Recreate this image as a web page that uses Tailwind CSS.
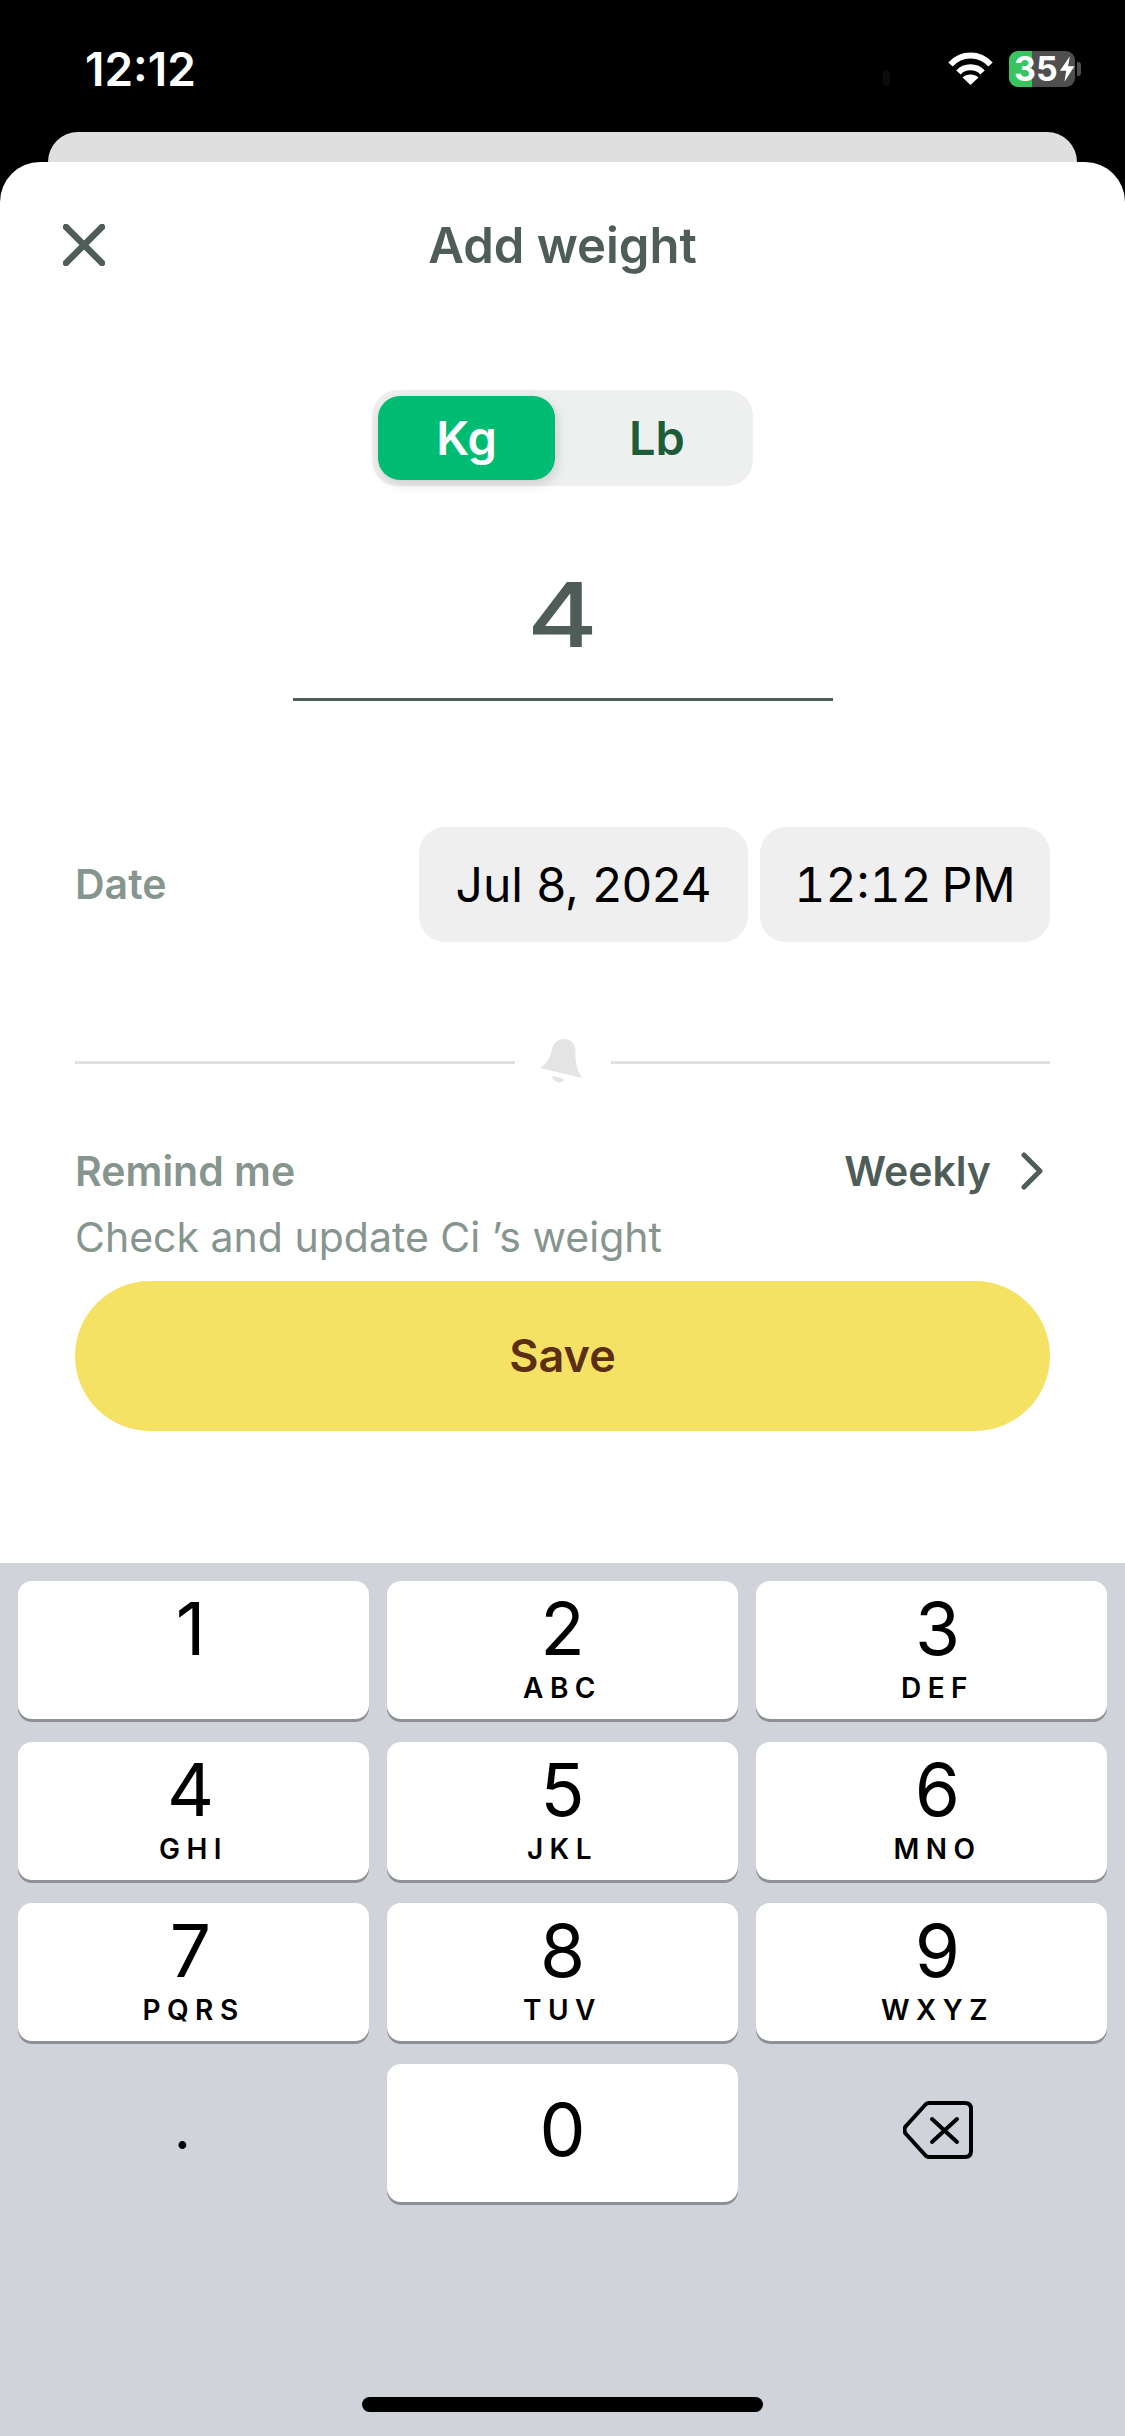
<!DOCTYPE html>
<html lang="en">
<head>
  <meta charset="UTF-8">
  <meta name="viewport" content="width=device-width, initial-scale=1.0">
  <title>Add weight</title>
  <script src="https://cdn.jsdelivr.net/npm/@tailwindcss/browser@4"></script>
</head>
<body class="bg-black font-['Inter',sans-serif]">
  <div class="w-[1125px] h-[2436px] flex flex-col overflow-hidden">

    <!-- status bar -->
    <div class="relative h-[132px] flex pl-[85px] pr-[50px] pt-[42px] text-white shrink-0">
      <span class="text-[46px] leading-[54px] font-semibold">12:12</span>
      <div class="absolute left-[883px] top-[70px] w-[7px] h-[16px] rounded-full bg-[#0c0c0c]"></div>
      <div class="ml-auto flex items-start gap-[16px] pt-[10px]">
        <svg class="w-[45px] h-[33px]" viewBox="0 0 45 33" fill="none" stroke="white" stroke-width="6">
          <path d="M2.5 12.5C13.5 0.5 31.5 0.5 42.5 12.5"/>
          <path d="M10.5 20.5C16.5 13.5 28.500 13.5 34.5 20.5"/>
          <path d="M22.5 33L14.5 25.5C18.5 21.5 26.5 21.5 30.5 25.5Z" fill="white" stroke="none"/>
        </svg>
        <div class="relative w-[66px] h-[36px] -mt-[1px] rounded-[9px] bg-[#4f4f4f]">
          <div class="absolute left-0 top-0 h-full w-[23px] rounded-l-[9px] bg-[#3ac45e]"></div>
          <div class="absolute inset-0 flex items-center pl-[5px] text-[34px] leading-none font-bold">
            <span>35</span>
            <svg class="w-[18px] h-[28px] ml-[1px]" viewBox="0 0 18 28" fill="white"><path d="M12 0L1 16H8L6 28L17 11H10Z"/></svg>
          </div>
          <div class="absolute -right-[6px] top-[11px] w-[4px] h-[14px] rounded-r-[3px] bg-[#4f4f4f]"></div>
        </div>
      </div>
    </div>

    <!-- card behind the sheet -->
    <div class="h-[30px] mx-[48px] rounded-t-[30px] bg-[#dfdfdf] shrink-0"></div>

    <!-- sheet -->
    <div class="h-[1401px] shrink-0 rounded-t-[40px] bg-white flex flex-col">
      <div class="h-[166px] shrink-0 grid grid-cols-[1fr_auto_1fr] items-center pl-[63px] text-[#4e5d57]">
        <svg class="w-[42px] h-[42px]" viewBox="0 0 42 42" fill="none" stroke="#4e5d57" stroke-width="6.500" stroke-linecap="round"><path d="M3 3L39 39M39 3L3 39"/></svg>
        <h1 class="text-[49px] leading-[60px] font-semibold -ml-[63px] pt-[2px]">Add weight</h1>
      </div>

      <!-- unit switch -->
      <div class="mt-[62px] self-center w-[381px] h-[96px] p-[6px] rounded-[26px] bg-[#eef0ef] flex text-[47px] font-semibold">
        <div class="w-[177px] rounded-[22px] bg-[#00bb72] text-white flex items-center justify-center shadow-[2px_4px_12px_rgba(0,0,0,0.14)]">Kg</div>
        <div class="flex-1 pl-[12px] flex items-center justify-center text-[#1c5c38]">Lb</div>
      </div>

      <div class="mt-[76px] h-[106px] flex items-center justify-center text-[90px] leading-none font-medium text-[#4e5d57]"><span class="scale-x-[1.2]">4</span></div>
      <div class="mt-[30px] self-center w-[540px] h-[3px] bg-[#4e5d57]"></div>

      <!-- date -->
      <div class="mt-[126px] mx-[75px] h-[115px] flex items-center gap-[12px]">
        <span class="mr-auto text-[41px] font-semibold text-[#87958f]">Date</span>
        <div class="w-[329px] h-full rounded-[26px] bg-[#efefef] flex items-center justify-center text-[48px] text-black">Jul 8, 2024</div>
        <div class="w-[290px] h-full rounded-[26px] bg-[#efefef] flex items-center justify-center text-[48px] text-black"><span class="tabular-nums">12:12</span><span class="ml-[10px]">PM</span></div>
      </div>

      <!-- divider -->
      <div class="mt-[97px] mx-[75px] h-[46px] flex items-center">
        <div class="flex-1 h-[3px] bg-[#e0e0e0]"></div>
        <svg class="w-[96px] h-[46px]" viewBox="0 0 96 46" fill="#e4e4e4">
          <path d="M25 29C33 24 35 18 37 10C39 3 44 0 49 0C56 0 61 5 60.500 14C60 23 62 31 67 39Z"/>
          <path d="M37 37L49 40C48 45 39 45 37 37Z"/>
        </svg>
        <div class="flex-1 h-[3px] bg-[#e0e0e0]"></div>
      </div>

      <!-- reminder -->
      <div class="mt-[62px] mx-[75px] h-[48px] flex items-center text-[41px] leading-[48px] font-semibold">
        <span class="mr-auto text-[#87958f]">Remind me</span>
        <span class="text-[#4e5d57]">Weekly</span>
        <svg class="w-[22px] h-[38px] ml-[30px] mr-[7px]" viewBox="0 0 22 38" fill="none" stroke="#4e5d57" stroke-width="5" stroke-linecap="round" stroke-linejoin="round"><path d="M3 3L19 19L3 35"/></svg>
      </div>
      <p class="mt-[18px] mx-[75px] text-[41px] leading-[48px] text-[#87958f]">Check and update Ci ’s weight</p>

      <button class="mt-[20px] mx-[75px] h-[150px] rounded-full bg-[#f5e264] text-[#5c2e14] text-[45px] font-semibold">Save</button>
    </div>

    <!-- keypad -->
    <div class="flex-1 bg-[#d0d3da] px-[18px] pt-[18px] relative">
      <div class="grid grid-cols-3 gap-x-[18px] gap-y-[23px] text-black">
        <div class="h-[138px] rounded-[14px] bg-white shadow-[0_3px_0_#8e9095] flex flex-col items-center pt-[10px]"><span class="pr-[6px] text-[73px] leading-[76px]">1</span></div>
        <div class="h-[138px] rounded-[14px] bg-white shadow-[0_3px_0_#8e9095] flex flex-col items-center pt-[10px]"><span class="text-[73px] leading-[76px]">2</span><span class="mt-[7px] text-[28px] leading-[28px] font-semibold tracking-[6.5px]">ABC</span></div>
        <div class="h-[138px] rounded-[14px] bg-white shadow-[0_3px_0_#8e9095] flex flex-col items-center pt-[10px] pl-[12px]"><span class="text-[73px] leading-[76px]">3</span><span class="mt-[7px] text-[28px] leading-[28px] font-semibold tracking-[6.5px]">DEF</span></div>
        <div class="h-[138px] rounded-[14px] bg-white shadow-[0_3px_0_#8e9095] flex flex-col items-center pt-[10px]"><span class="pr-[6px] text-[73px] leading-[76px]">4</span><span class="mt-[7px] text-[28px] leading-[28px] font-semibold tracking-[6.5px]">GHI</span></div>
        <div class="h-[138px] rounded-[14px] bg-white shadow-[0_3px_0_#8e9095] flex flex-col items-center pt-[10px]"><span class="text-[73px] leading-[76px]">5</span><span class="mt-[7px] text-[28px] leading-[28px] font-semibold tracking-[6.5px]">JKL</span></div>
        <div class="h-[138px] rounded-[14px] bg-white shadow-[0_3px_0_#8e9095] flex flex-col items-center pt-[10px] pl-[12px]"><span class="text-[73px] leading-[76px]">6</span><span class="mt-[7px] text-[28px] leading-[28px] font-semibold tracking-[6.5px]">MNO</span></div>
        <div class="h-[138px] rounded-[14px] bg-white shadow-[0_3px_0_#8e9095] flex flex-col items-center pt-[10px]"><span class="pr-[6px] text-[73px] leading-[76px]">7</span><span class="mt-[7px] text-[28px] leading-[28px] font-semibold tracking-[6.5px]">PQRS</span></div>
        <div class="h-[138px] rounded-[14px] bg-white shadow-[0_3px_0_#8e9095] flex flex-col items-center pt-[10px]"><span class="text-[73px] leading-[76px]">8</span><span class="mt-[7px] text-[28px] leading-[28px] font-semibold tracking-[6.5px]">TUV</span></div>
        <div class="h-[138px] rounded-[14px] bg-white shadow-[0_3px_0_#8e9095] flex flex-col items-center pt-[10px] pl-[12px]"><span class="text-[73px] leading-[76px]">9</span><span class="mt-[7px] text-[28px] leading-[28px] font-semibold tracking-[6.5px]">WXYZ</span></div>
        <div class="h-[138px] flex items-center justify-center pr-[22px] pb-[12px] text-[60px] leading-none">.</div>
        <div class="h-[138px] rounded-[14px] bg-white shadow-[0_3px_0_#8e9095] flex flex-col items-center pt-[28px]"><span class="text-[73px] leading-[76px]">0</span></div>
        <div class="h-[138px] flex items-start justify-center pt-[37px] pl-[12px]">
          <svg class="w-[70px] h-[58px]" viewBox="0 0 70 58" fill="none" stroke="black" stroke-width="4" stroke-linecap="round" stroke-linejoin="round">
            <path d="M26 2H62C66 2 68 4 68 8V50C68 54 66 56 62 56H26C25 56 24 55.500 23 55L3 33C1 31 1 27 3 25L23 3C24 2.500 25 2 26 2Z"/>
            <path d="M29 18L54 41M54 18L29 41"/>
          </svg>
        </div>
      </div>
      <div class="absolute left-[362px] bottom-[24px] w-[401px] h-[15px] rounded-full bg-black"></div>
    </div>
  </div>
</body>
</html>
